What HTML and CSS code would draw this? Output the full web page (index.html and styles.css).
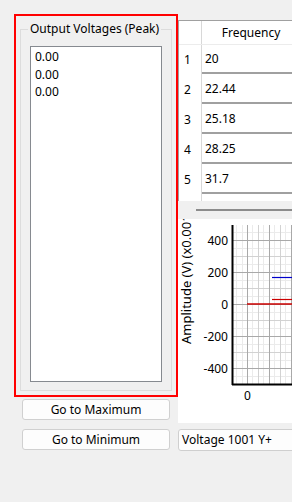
FILE: index.html
```html
<!DOCTYPE html>
<html lang="en">
<head>
  <meta charset="UTF-8">
  <title>Output Voltages</title>
  <link rel="stylesheet" href="styles.css">
</head>
<body>

<div class="page">
  <div class="left">
    <div class="highlight">
      <fieldset class="group">
        <legend>Output Voltages (Peak)</legend>
        <div class="list">
          <div class="item">0.00</div>
          <div class="item">0.00</div>
          <div class="item">0.00</div>
        </div>
      </fieldset>
    </div>
    <button class="btn btn-max">Go to Maximum</button>
    <button class="btn btn-min">Go to Minimum</button>
  </div>

  <div class="right">
    <div class="table">
      <div class="row head">
        <div class="rowhead"></div>
        <div class="colhead">Frequency</div>
      </div>
      <div class="row"><div class="rowhead">1</div><div class="cell">20</div></div>
      <div class="row"><div class="rowhead">2</div><div class="cell">22.44</div></div>
      <div class="row"><div class="rowhead">3</div><div class="cell">25.18</div></div>
      <div class="row"><div class="rowhead">4</div><div class="cell">28.25</div></div>
      <div class="row"><div class="rowhead">5</div><div class="cell">31.7</div></div>
      <div class="row"><div class="rowhead"></div><div class="cell"></div></div>
    </div>

    <div class="splitter"><span class="handle"></span></div>

    <div class="chart">
      <svg width="114" height="204" viewBox="0 0 114 204">
        <!-- feines Raster -->
        <g stroke="#ebebeb" stroke-width="1">
          <line x1="54" y1="13.5" x2="114" y2="13.5"/>
          <line x1="54" y1="29.5" x2="114" y2="29.5"/>
          <line x1="54" y1="45.5" x2="114" y2="45.5"/>
          <line x1="54" y1="61.5" x2="114" y2="61.5"/>
          <line x1="54" y1="77.5" x2="114" y2="77.5"/>
          <line x1="54" y1="93.5" x2="114" y2="93.5"/>
          <line x1="54" y1="109.5" x2="114" y2="109.5"/>
          <line x1="54" y1="125.5" x2="114" y2="125.5"/>
          <line x1="54" y1="141.5" x2="114" y2="141.5"/>
          <line x1="54" y1="157.5" x2="114" y2="157.5"/>
          <line x1="58.5" y1="6" x2="58.5" y2="165"/>
          <line x1="64.5" y1="6" x2="64.5" y2="165"/>
          <line x1="74.5" y1="6" x2="74.5" y2="165"/>
          <line x1="85.5" y1="6" x2="85.5" y2="165"/>
          <line x1="96.5" y1="6" x2="96.5" y2="165"/>
          <line x1="107.5" y1="6" x2="107.5" y2="165"/>
        </g>
        <!-- Nebenlinien -->
        <g stroke="#d2d2d2" stroke-width="1">
          <line x1="54" y1="37.5" x2="114" y2="37.5"/>
          <line x1="54" y1="69.5" x2="114" y2="69.5"/>
          <line x1="54" y1="101.5" x2="114" y2="101.5"/>
          <line x1="54" y1="133.5" x2="114" y2="133.5"/>
          <line x1="80.5" y1="6" x2="80.5" y2="165"/>
          <line x1="102.5" y1="6" x2="102.5" y2="165"/>
        </g>
        <!-- Hauptlinien -->
        <g stroke="#a9a9a9" stroke-width="1">
          <line x1="54" y1="21.5" x2="114" y2="21.5"/>
          <line x1="54" y1="53.5" x2="114" y2="53.5"/>
          <line x1="54" y1="85.5" x2="114" y2="85.5"/>
          <line x1="54" y1="117.5" x2="114" y2="117.5"/>
          <line x1="54" y1="149.5" x2="114" y2="149.5"/>
          <line x1="69.5" y1="6" x2="69.5" y2="165"/>
          <line x1="91.5" y1="6" x2="91.5" y2="165"/>
          <line x1="113.5" y1="6" x2="113.5" y2="165"/>
        </g>
        <!-- Kurven -->
        <line x1="69" y1="85" x2="114" y2="85" stroke="#cc0000" stroke-width="1.5"/>
        <line x1="94" y1="80.5" x2="114" y2="80.5" stroke="#cc0000" stroke-width="1.2"/>
        <line x1="94" y1="58.5" x2="114" y2="58.5" stroke="#0000cc" stroke-width="1.2"/>
        <!-- Achsen -->
        <line x1="54.5" y1="6" x2="54.5" y2="166" stroke="#000" stroke-width="2"/>
        <line x1="54" y1="165.5" x2="114" y2="165.5" stroke="#000" stroke-width="2"/>
        <g class="ticks" text-anchor="end">
          <text x="50" y="26">400</text>
          <text x="50" y="58">200</text>
          <text x="50" y="90">0</text>
          <text x="50" y="122">-200</text>
          <text x="50" y="154">-400</text>
        </g>
        <text class="ticks" x="69.5" y="181" text-anchor="middle">0</text>
        <text class="ticks title" transform="translate(13,125) rotate(-90)">Amplitude (V) (x0.001)</text>
      </svg>
    </div>

    <div class="combo">Voltage 1001 Y+</div>
  </div>
</div>

</body>
</html>
```

FILE: styles.css
```css
html, body {
  margin: 0;
  padding: 0;
}
body {
  width: 292px;
  height: 502px;
  overflow: hidden;
  background-color: #f0f0f0;
  font-family: "Noto Sans", "DejaVu Sans", sans-serif;
  font-size: 12px;
  color: #000;
}
.page {
  display: flex;
  padding: 14px 0 0 14px;
}
.left {
  width: 164px;
  flex: none;
  display: flex;
  flex-direction: column;
}
.highlight {
  border: 2px solid #ff0000;
}
.group {
  margin: 5px 4px 4px 4px;
  padding: 0 9px 8px 9px;
  border: 1px solid #dcdcdc;
  min-width: 0;
}
.group legend {
  padding: 0 2px;
  margin-left: -2px;
  line-height: 16px;
  white-space: nowrap;
}
.list {
  margin-top: 9px;
  height: 336px;
  box-sizing: border-box;
  border: 1px solid #868a90;
  background-color: white;
  padding: 1px 4px;
}
.item {
  line-height: 17.6px;
}
.btn {
  font-family: inherit;
  font-size: 12px;
  color: #000;
  margin-left: 8px;
  width: 148px;
  height: 21px;
  padding: 0;
  background-color: #fdfdfd;
  border: 1px solid #d0d0d0;
  border-radius: 3px;
}
.btn-max {
  margin-top: 2px;
}
.btn-min {
  margin-top: 9px;
}

.right {
  width: 140px;
  flex: none;
  margin-top: 6px;
}
.table {
  height: 181px;
  box-sizing: border-box;
  overflow: hidden;
  border-top: 1px solid #a0a0a0;
  border-left: 1px solid #a0a0a0;
  background-color: white;
}
.row {
  display: flex;
  height: 30px;
}
.row.head {
  height: 24px;
  border-bottom: 1px solid #ececec;
  box-sizing: border-box;
}
.rowhead {
  width: 23px;
  flex: none;
  border-right: 1px solid #d8d8d8;
  padding-left: 5px;
  box-sizing: border-box;
  line-height: 29px;
}
.colhead {
  width: 98px;
  text-align: center;
  line-height: 23px;
}
.cell {
  width: 110px;
  height: 29px;
  box-sizing: border-box;
  border-bottom: 2px solid #a0a0a0;
  padding-left: 3px;
  line-height: 28px;
}
.splitter {
  height: 18px;
  position: relative;
}
.handle {
  position: absolute;
  left: 18px;
  right: 0;
  top: 8px;
  height: 2px;
  background-color: #8c8c8c;
}
.chart {
  height: 204px;
  background-color: white;
}
.chart svg {
  display: block;
}
.ticks {
  font-family: "Noto Sans", "DejaVu Sans", sans-serif;
  font-size: 12px;
  fill: #000;
}
.ticks.title {
  font-size: 13px;
}
.combo {
  margin-top: 6px;
  height: 22px;
  box-sizing: border-box;
  border: 1px solid #cfcfcf;
  border-radius: 3px;
  background-color: #fdfdfd;
  padding-left: 3px;
  line-height: 20px;
}
```
